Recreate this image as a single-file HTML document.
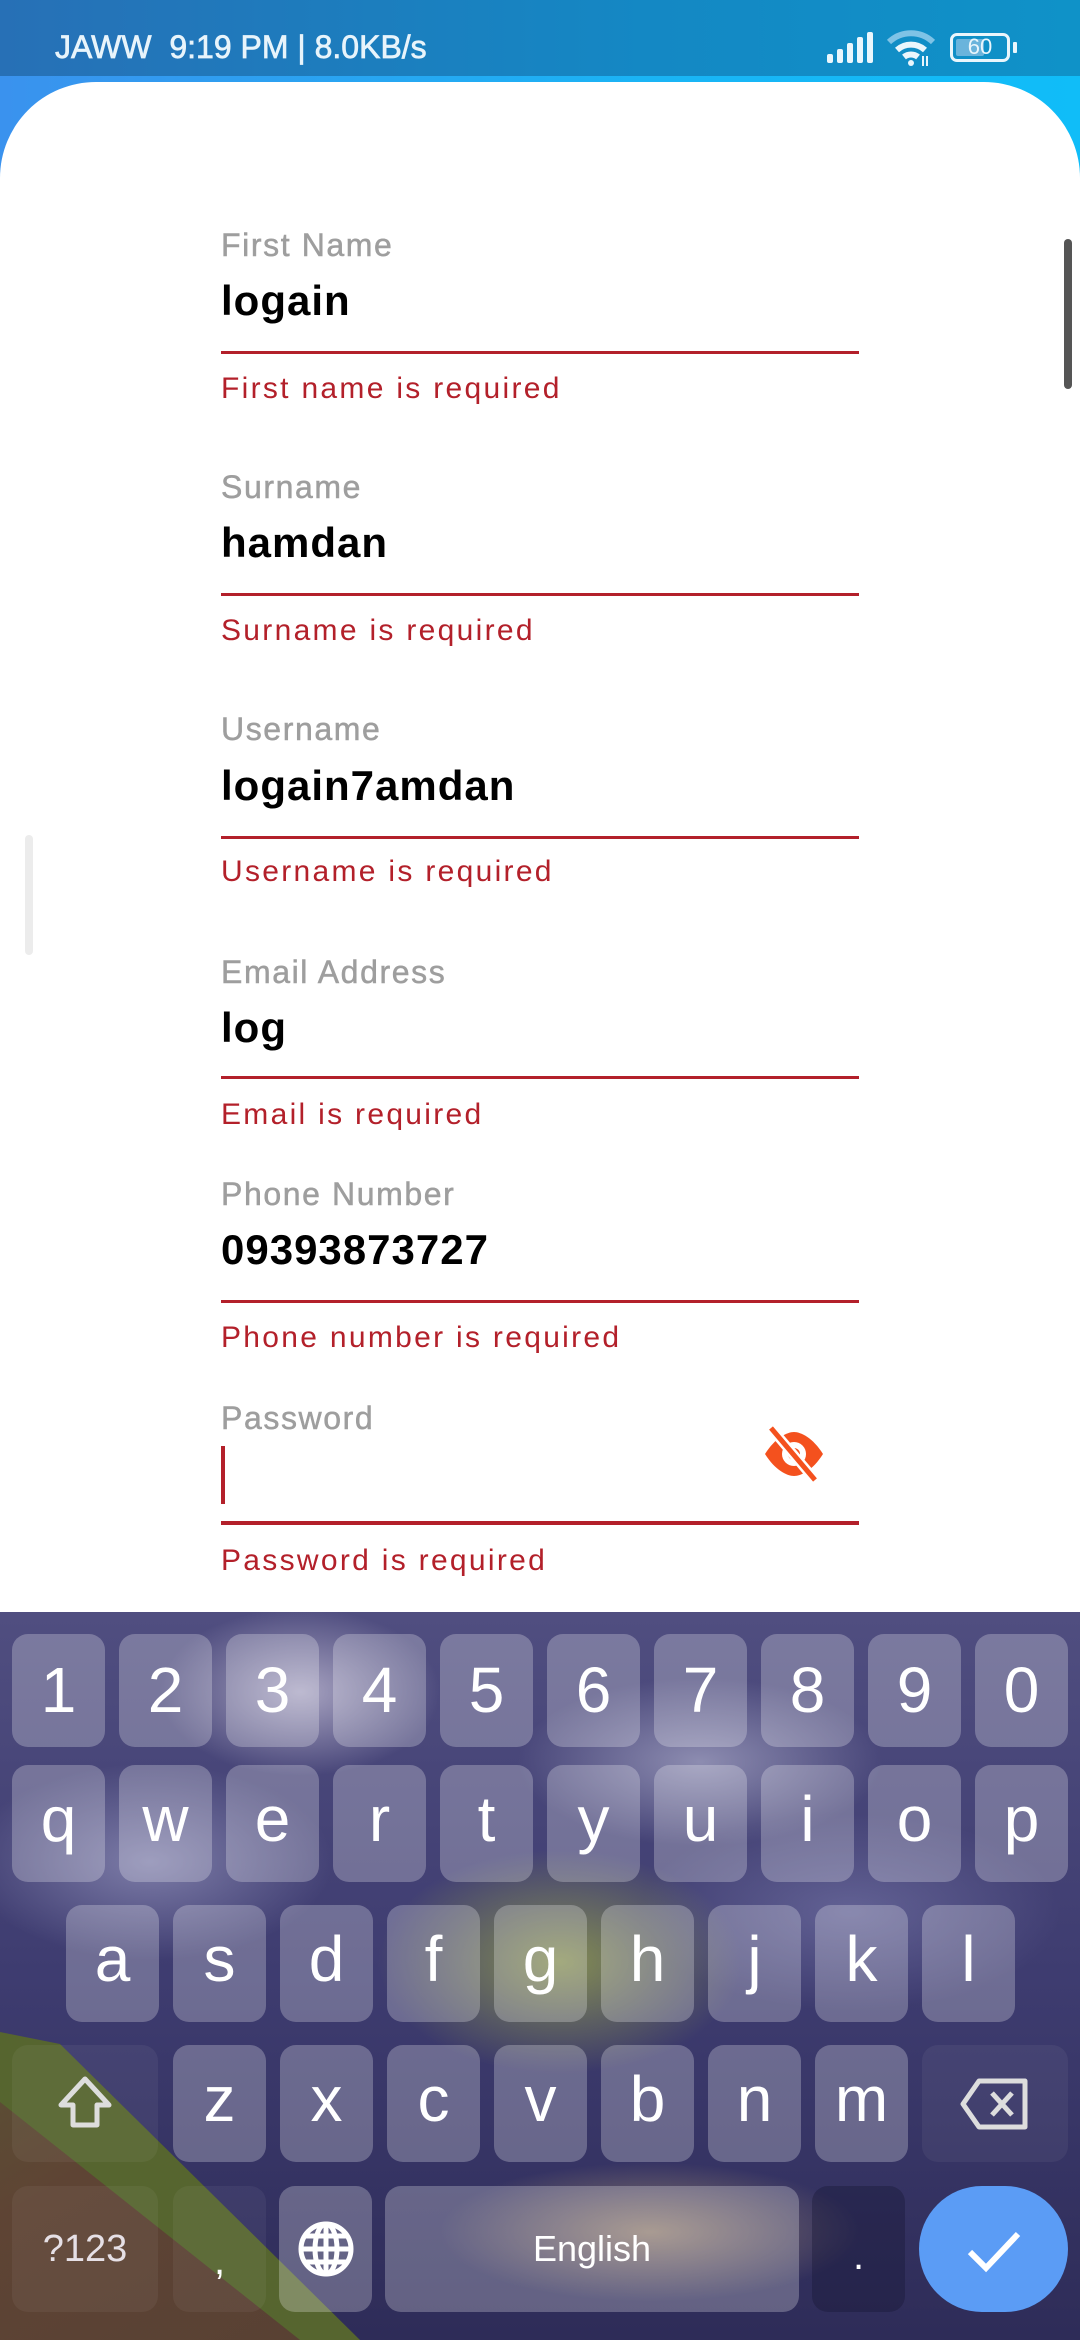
<!DOCTYPE html>
<html><head><meta charset="utf-8"><style>
*{margin:0;padding:0;box-sizing:border-box}
html,body{width:1080px;height:2340px;overflow:hidden;background:#fff;font-family:"Liberation Sans",sans-serif}
.sb{position:absolute;left:0;top:0;width:1080px;height:80px;background:linear-gradient(90deg,#2770b6,#1488c4 60%,#0f92c8)}
.sbt{position:absolute;left:55px;top:29px;color:#e8f4fb;font-size:32px;-webkit-text-stroke:0.7px #e8f4fb;letter-spacing:0px}
.bg2{position:absolute;left:0;top:76px;width:1080px;height:140px;background:linear-gradient(90deg,#3a92ee,#1ab4f5 60%,#10bdf8)}
.card{position:absolute;left:0;top:82px;width:1080px;height:1560px;background:#fff;border-radius:96px 96px 0 0}
.f{position:absolute;left:221px;width:638px}
.lab{position:absolute;left:0;color:#9e9e9e;font-size:32px;letter-spacing:1.6px;-webkit-text-stroke:0.5px #9e9e9e}
.val{position:absolute;left:0;color:#000;font-size:42px;font-weight:bold;letter-spacing:1px}
.ln{position:absolute;left:0;width:638px;height:3px;background:#b3202a}
.err{position:absolute;left:0;color:#b3202a;font-size:30px;letter-spacing:2.3px;white-space:nowrap}
.kb{position:absolute;left:0;top:1612px;width:1080px;height:728px;overflow:hidden;
background:
radial-gradient(ellipse 260px 160px at 560px 350px,rgba(140,150,80,.9),transparent 70%),
radial-gradient(ellipse 200px 120px at 300px 80px,rgba(190,185,210,.8),transparent 70%),
radial-gradient(ellipse 260px 120px at 700px 150px,rgba(170,170,200,.7),transparent 70%),
radial-gradient(ellipse 260px 140px at 150px 250px,rgba(150,150,190,.7),transparent 70%),
radial-gradient(ellipse 300px 140px at 850px 300px,rgba(120,120,170,.6),transparent 70%),
radial-gradient(ellipse 300px 100px at 650px 620px,rgba(200,170,120,.6),transparent 70%),
linear-gradient(180deg,#504e80,#3e3c70 50%,#2e2c58)}
.hill{position:absolute;left:0;top:0;width:1080px;height:728px;background:linear-gradient(150deg,#5a6234 0%,#5a5234 30%,#5e4434 45%,#503c32 100%);clip-path:polygon(0 428px,60px 440px,350px 728px,0 728px)}
.hillg{position:absolute;left:0;top:0;width:1080px;height:728px;background:#56652f;clip-path:polygon(0 420px,60px 432px,360px 728px,300px 728px,0 490px)}
.k{position:absolute;width:93px;height:113px;border-radius:16px;background:rgba(255,255,255,.25);color:#fff;font-size:64px;text-align:center;line-height:113px}
.k.l{line-height:108px}
.k.d{background:rgba(255,255,255,.05)}
.k.dd{background:rgba(20,20,50,.35)}
</style></head><body>
<div class="sb"><div class="sbt">JAWW&nbsp; 9:19 PM | 8.0KB/s</div>
<svg style="position:absolute;left:826px;top:32px" width="50" height="32"><rect x="1" y="22" width="6" height="9" rx="2" fill="#eaf6fc"/><rect x="11" y="17" width="6" height="14" rx="2" fill="#eaf6fc"/><rect x="21" y="11" width="6" height="20" rx="2" fill="#eaf6fc"/><rect x="31" y="5" width="6" height="26" rx="2" fill="#eaf6fc"/><rect x="41" y="0" width="6" height="31" rx="2" fill="#eaf6fc"/></svg>
<svg style="position:absolute;left:886px;top:30px" width="52" height="36"><path d="M3 12 A32 32 0 0 1 47 12" stroke="#7fc3e6" stroke-width="6" fill="none"/><path d="M11 20 A21 21 0 0 1 39 20" stroke="#eaf6fc" stroke-width="6" fill="none"/><path d="M18 27 A11 11 0 0 1 32 27" stroke="#eaf6fc" stroke-width="6" fill="none"/><circle cx="25" cy="33" r="3" fill="#eaf6fc"/><path d="M37 26v10M41 36v-10" stroke="#eaf6fc" stroke-width="2"/></svg>
<div style="position:absolute;left:950px;top:33px;width:60px;height:29px;border:3px solid #eaf6fc;border-radius:7px"><div style="position:absolute;left:3px;top:3px;width:28px;height:17px;background:#6ab4dc;border-radius:2px"></div><div style="position:absolute;left:0;top:-2px;width:54px;text-align:center;color:#eaf6fc;font-size:22px">60</div></div>
<div style="position:absolute;left:1013px;top:42px;width:4px;height:11px;background:#eaf6fc;border-radius:1px"></div>
</div>
<div class="bg2"></div>
<div class="card"></div>
<div style="position:absolute;left:1064px;top:239px;width:8px;height:150px;background:#555;border-radius:4px"></div>
<div style="position:absolute;left:25px;top:835px;width:8px;height:120px;background:#ececec;border-radius:4px"></div>

<div class="f" style="top:0">
<div class="lab" style="top:227px">First Name</div><div class="val" style="top:277px">logain</div><div class="ln" style="top:351px"></div><div class="err" style="top:372px">First name is required</div>
<div class="lab" style="top:469px">Surname</div><div class="val" style="top:519px">hamdan</div><div class="ln" style="top:593px"></div><div class="err" style="top:614px">Surname is required</div>
<div class="lab" style="top:711px">Username</div><div class="val" style="top:762px">logain7amdan</div><div class="ln" style="top:836px"></div><div class="err" style="top:855px">Username is required</div>
<div class="lab" style="top:954px">Email Address</div><div class="val" style="top:1004px">log</div><div class="ln" style="top:1076px"></div><div class="err" style="top:1098px">Email is required</div>
<div class="lab" style="top:1176px">Phone Number</div><div class="val" style="top:1226px">09393873727</div><div class="ln" style="top:1300px"></div><div class="err" style="top:1321px">Phone number is required</div>
<div class="lab" style="top:1400px">Password</div>
<div style="position:absolute;left:0;top:1446px;width:4px;height:58px;background:#b3202a"></div>
<div class="ln" style="top:1521px;height:4px"></div><div class="err" style="top:1544px">Password is required</div>
</div>
<svg style="position:absolute;left:763px;top:1426px" width="62" height="56" viewBox="0 0 62 56"><path d="M2 28 C12 12 24 6 31 6 C38 6 50 12 60 28 C50 44 38 50 31 50 C24 50 12 44 2 28Z" fill="#f4511e"/><circle cx="31" cy="28" r="12" fill="#fff"/><circle cx="31" cy="28" r="6" fill="#f4511e"/><path d="M8 2 L52 54" stroke="#fff" stroke-width="10"/><path d="M8 2 L52 54" stroke="#f4511e" stroke-width="5"/></svg>

<div class="kb"><div class="hill"></div><div class="hillg"></div>
<div class="k" style="left:12px;top:22px">1</div><div class="k" style="left:119px;top:22px">2</div><div class="k" style="left:226px;top:22px">3</div><div class="k" style="left:333px;top:22px">4</div><div class="k" style="left:440px;top:22px">5</div><div class="k" style="left:547px;top:22px">6</div><div class="k" style="left:654px;top:22px">7</div><div class="k" style="left:761px;top:22px">8</div><div class="k" style="left:868px;top:22px">9</div><div class="k" style="left:975px;top:22px">0</div>
<div class="k l" style="left:12px;top:153px;height:117px">q</div><div class="k l" style="left:119px;top:153px;height:117px">w</div><div class="k l" style="left:226px;top:153px;height:117px">e</div><div class="k l" style="left:333px;top:153px;height:117px">r</div><div class="k l" style="left:440px;top:153px;height:117px">t</div><div class="k l" style="left:547px;top:153px;height:117px">y</div><div class="k l" style="left:654px;top:153px;height:117px">u</div><div class="k l" style="left:761px;top:153px;height:117px">i</div><div class="k l" style="left:868px;top:153px;height:117px">o</div><div class="k l" style="left:975px;top:153px;height:117px">p</div>
<div class="k l" style="left:66px;top:293px;height:117px">a</div><div class="k l" style="left:173px;top:293px;height:117px">s</div><div class="k l" style="left:280px;top:293px;height:117px">d</div><div class="k l" style="left:387px;top:293px;height:117px">f</div><div class="k l" style="left:494px;top:293px;height:117px">g</div><div class="k l" style="left:601px;top:293px;height:117px">h</div><div class="k l" style="left:708px;top:293px;height:117px">j</div><div class="k l" style="left:815px;top:293px;height:117px">k</div><div class="k l" style="left:922px;top:293px;height:117px">l</div>
<div class="k d" style="left:12px;top:433px;width:146px;height:117px"><svg width="60" height="60" style="margin-top:28px" viewBox="0 0 60 60"><path d="M30 6 L54 32 H42 V52 H18 V32 H6Z" fill="none" stroke="#ddd" stroke-width="5" stroke-linejoin="round"/></svg></div>
<div class="k l" style="left:173px;top:433px;height:117px">z</div><div class="k l" style="left:280px;top:433px;height:117px">x</div><div class="k l" style="left:387px;top:433px;height:117px">c</div><div class="k l" style="left:494px;top:433px;height:117px">v</div><div class="k l" style="left:601px;top:433px;height:117px">b</div><div class="k l" style="left:708px;top:433px;height:117px">n</div><div class="k l" style="left:815px;top:433px;height:117px">m</div>
<div class="k d" style="left:922px;top:433px;width:146px;height:117px"><svg width="72" height="54" style="margin-top:32px" viewBox="0 0 72 54"><path d="M20 4 H66 V50 H20 L4 27Z" fill="none" stroke="#ddd" stroke-width="5" stroke-linejoin="round"/><path d="M33 16 L53 38 M53 16 L33 38" stroke="#ddd" stroke-width="5"/></svg></div>
<div class="k d" style="left:12px;top:574px;width:146px;height:126px;font-size:38px;line-height:126px;color:#e6e0e6">?123</div>
<div class="k d" style="left:173px;top:574px;height:126px;font-size:40px;line-height:150px">,</div>
<div class="k" style="left:279px;top:574px;height:126px"><svg width="58" height="58" style="margin-top:34px" viewBox="0 0 58 58" fill="none" stroke="#fff" stroke-width="5"><circle cx="29" cy="29" r="25"/><ellipse cx="29" cy="29" rx="11" ry="25"/><path d="M4 29H54M8 16H50M8 42H50M29 4V54"/></svg></div>
<div class="k" style="left:385px;top:574px;width:414px;height:126px;font-size:36px;line-height:126px">English</div>
<div class="k dd" style="left:812px;top:574px;height:126px;font-size:40px;line-height:140px">.</div>
<div style="position:absolute;left:919px;top:574px;width:149px;height:126px;border-radius:63px;background:#5b9cf5"><svg width="60" height="50" style="position:absolute;left:45px;top:40px" viewBox="0 0 60 50"><path d="M6 26 L22 42 L54 8" fill="none" stroke="#fff" stroke-width="6"/></svg></div>
</div>
</body></html>
